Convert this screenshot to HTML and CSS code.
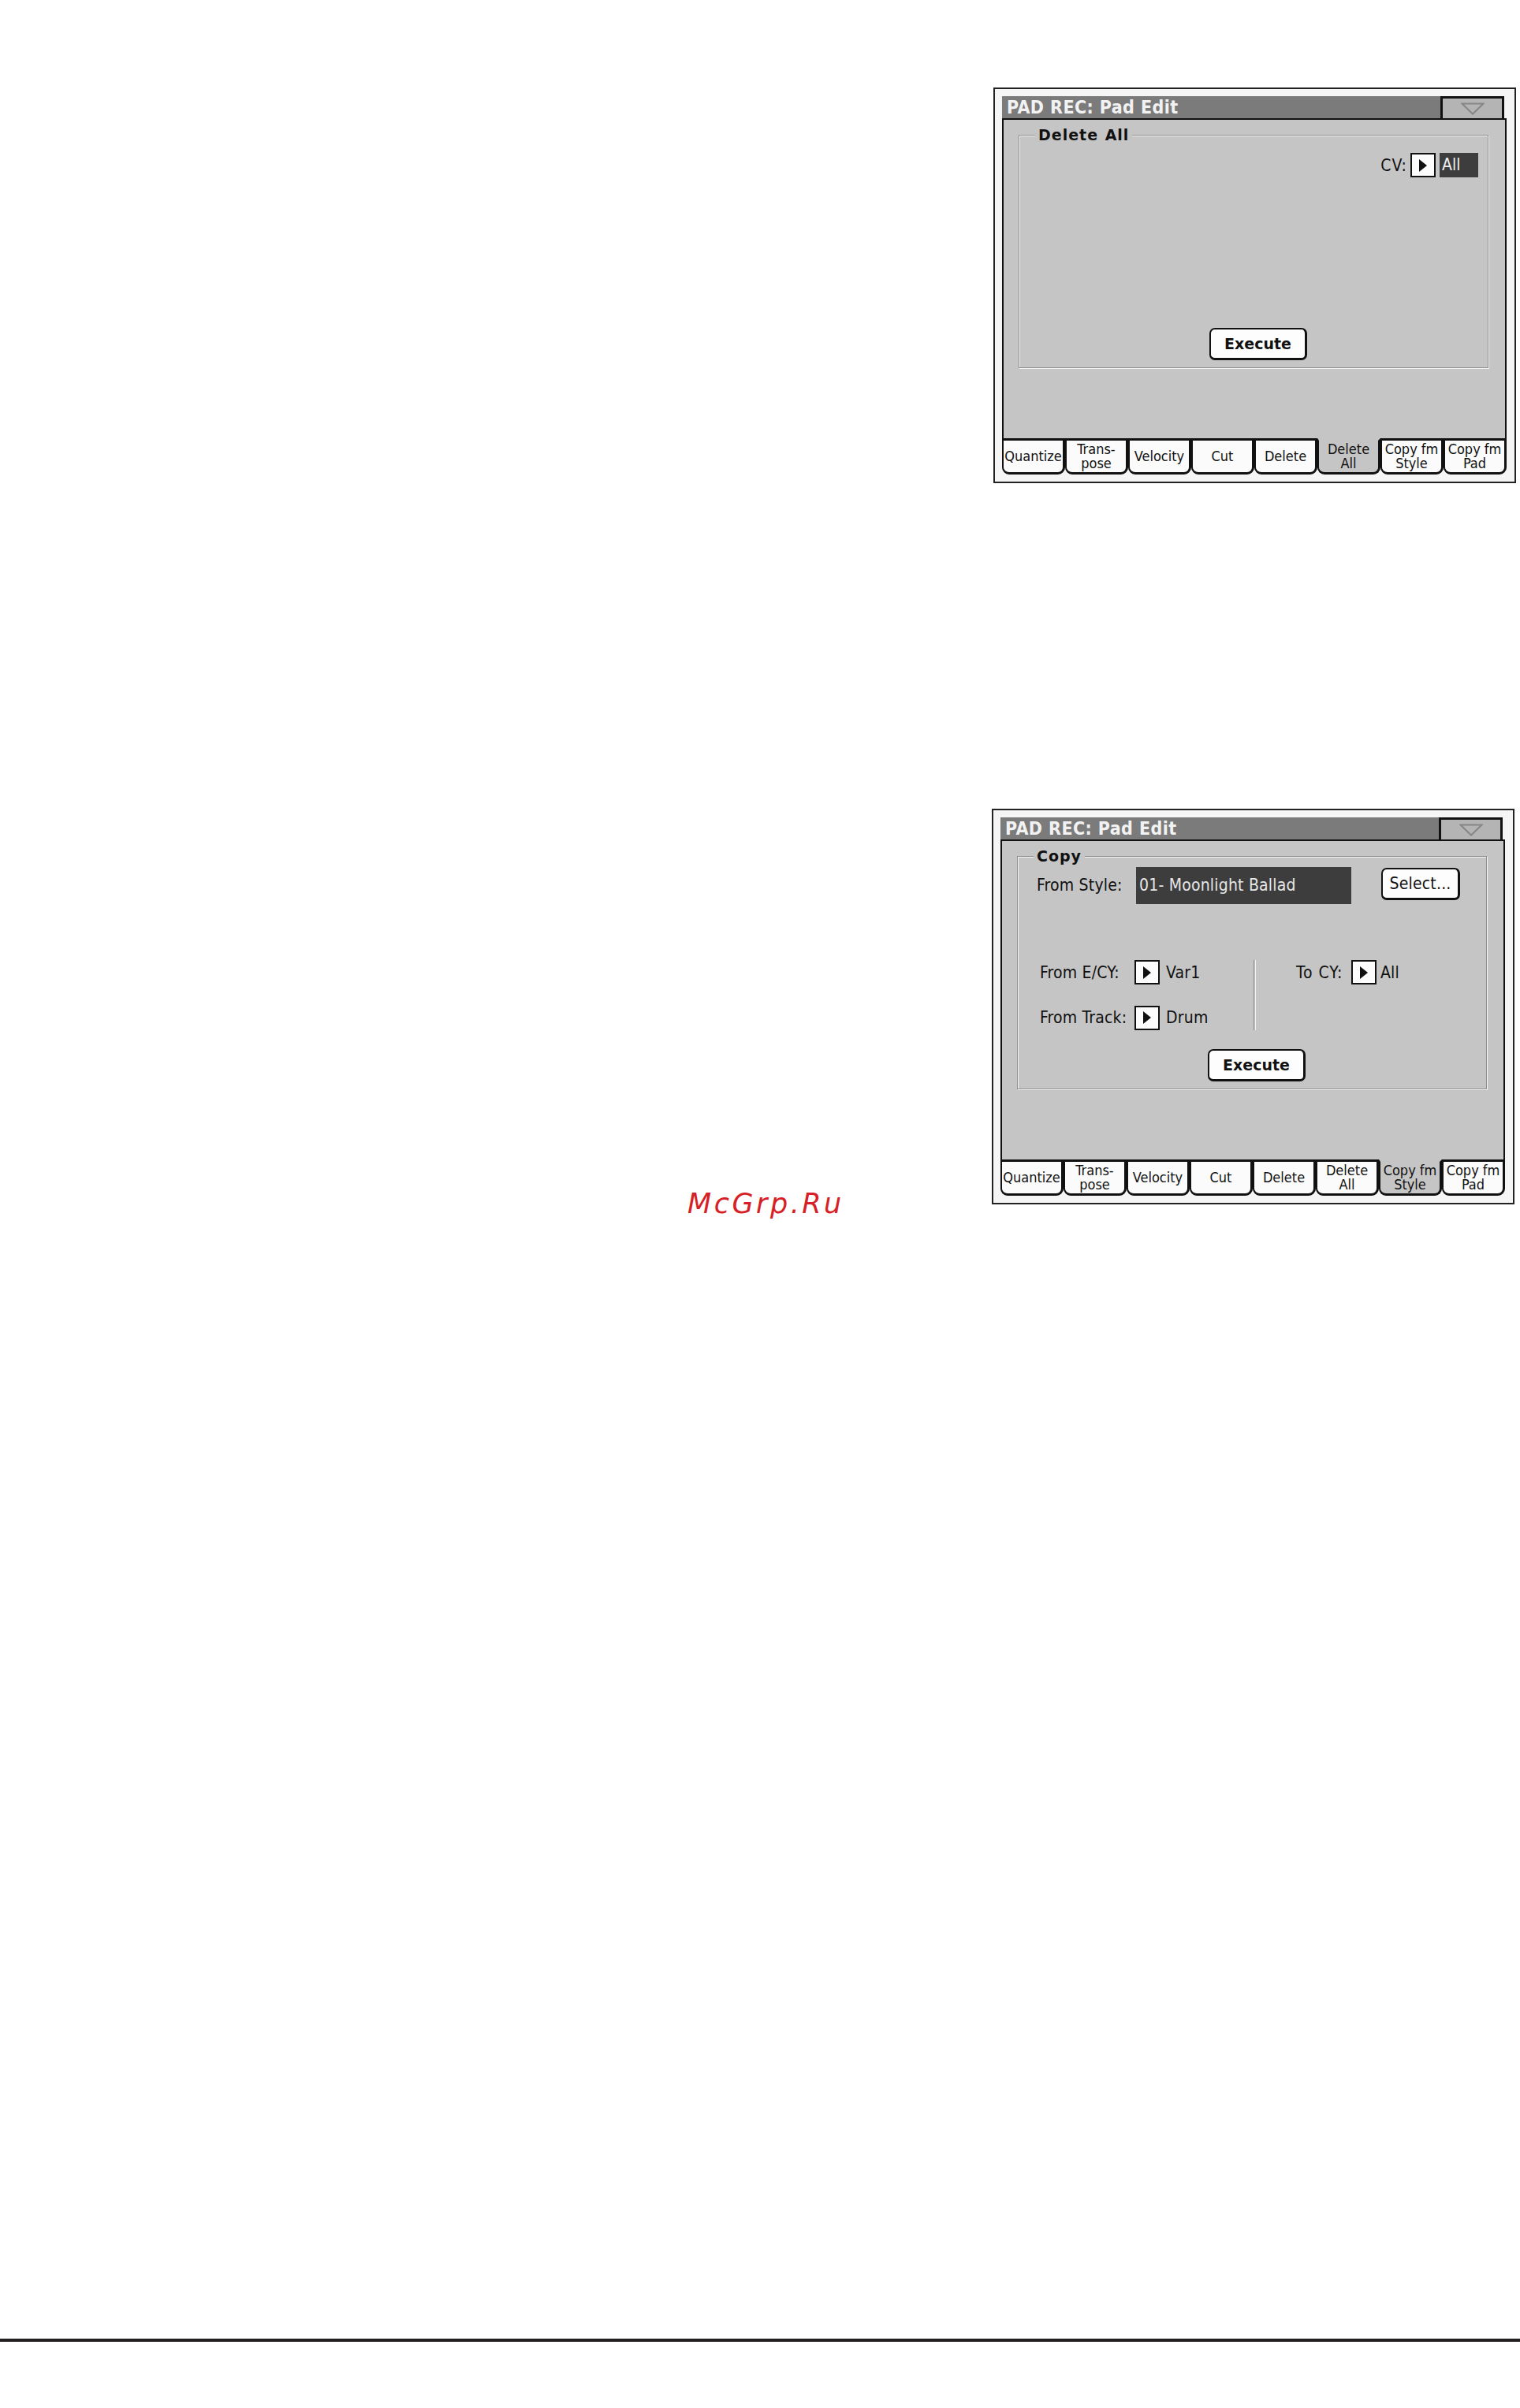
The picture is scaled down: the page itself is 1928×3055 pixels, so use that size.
FILE: index.html
```html
<!DOCTYPE html>
<html>
<head>
    <title>PAD REC: Pad Edit</title>
    <link rel="stylesheet" href="styles.css">
</head>
<body>
    <div class="page">
        <div class="row row-first">
            <div class="screen">
                <div class="lcd">
                    <div class="titlebar">
                        <span class="title">PAD REC: Pad Edit</span>
                        <span class="menu-button">
                            <svg width="30" height="16" viewBox="0 0 30 16"><polygon points="1.5,1.5 28.5,1.5 15,14.5" fill="none" stroke="#868686" stroke-width="2"/></svg>
                        </span>
                    </div>
                    <div class="panel">
                        <div class="group">
                            <div class="group-title">Delete All</div>
                            <div class="cv-row">
                                <span class="label">CV:</span>
                                <span class="arrow-box"><svg width="10" height="16" viewBox="0 0 10 16"><polygon points="0,0 10,8 0,16" fill="#111"/></svg></span>
                                <span class="value-dark">All</span>
                            </div>
                            <div class="execute">Execute</div>
                        </div>
                    </div>
                    <div class="tabs">
                        <div class="tab">Quantize</div>
                        <div class="tab">Trans-<br>pose</div>
                        <div class="tab">Velocity</div>
                        <div class="tab">Cut</div>
                        <div class="tab">Delete</div>
                        <div class="tab selected">Delete<br>All</div>
                        <div class="tab">Copy fm<br>Style</div>
                        <div class="tab">Copy fm<br>Pad</div>
                    </div>
                </div>
            </div>
        </div>

        <div class="row row-second">
            <div class="mark">McGrp.Ru</div>
            <div class="screen">
                <div class="lcd">
                    <div class="titlebar">
                        <span class="title">PAD REC: Pad Edit</span>
                        <span class="menu-button">
                            <svg width="30" height="16" viewBox="0 0 30 16"><polygon points="1.5,1.5 28.5,1.5 15,14.5" fill="none" stroke="#868686" stroke-width="2"/></svg>
                        </span>
                    </div>
                    <div class="panel">
                        <div class="group">
                            <div class="group-title">Copy</div>
                            <div class="style-row">
                                <span class="label">From Style:</span>
                                <span class="style-value">01- Moonlight Ballad</span>
                                <span class="select-button">Select...</span>
                            </div>
                            <div class="params">
                                <div class="params-left">
                                    <span class="label">From E/CY:</span>
                                    <span class="arrow-box"><svg width="10" height="16" viewBox="0 0 10 16"><polygon points="0,0 10,8 0,16" fill="#111"/></svg></span>
                                    <span class="value">Var1</span>
                                    <span class="label">From Track:</span>
                                    <span class="arrow-box"><svg width="10" height="16" viewBox="0 0 10 16"><polygon points="0,0 10,8 0,16" fill="#111"/></svg></span>
                                    <span class="value">Drum</span>
                                </div>
                                <div class="separator"></div>
                                <div class="params-right">
                                    <span class="label">To CY:</span>
                                    <span class="arrow-box"><svg width="10" height="16" viewBox="0 0 10 16"><polygon points="0,0 10,8 0,16" fill="#111"/></svg></span>
                                    <span class="value">All</span>
                                </div>
                            </div>
                            <div class="execute">Execute</div>
                        </div>
                    </div>
                    <div class="tabs">
                        <div class="tab">Quantize</div>
                        <div class="tab">Trans-<br>pose</div>
                        <div class="tab">Velocity</div>
                        <div class="tab">Cut</div>
                        <div class="tab">Delete</div>
                        <div class="tab">Delete<br>All</div>
                        <div class="tab selected">Copy fm<br>Style</div>
                        <div class="tab">Copy fm<br>Pad</div>
                    </div>
                </div>
            </div>
        </div>

        <div class="rule"></div>
    </div>
</body>
</html>
```

FILE: styles.css
```css
body {
    margin: 0;
    background-color: #ffffff;
    font-family: "DejaVu Sans", sans-serif;
}

.page {
    padding-top: 111px;
}

.row {
    display: flex;
    align-items: flex-start;
}

.row-first {
    justify-content: flex-end;
    padding-right: 5px;
}

.row-second {
    margin-top: 413px;
    padding-right: 7px;
}

.row-second .screen {
    margin-left: auto;
}

.mark {
    margin-left: 872px;
    margin-top: 484px;
    height: 35px;
    font-family: "DejaVu Sans", sans-serif;
    font-style: italic;
    font-size: 35px;
    line-height: 35px;
    letter-spacing: 3.5px;
    color: #d61f26;
}

.rule {
    margin-top: 1422px;
    height: 4px;
    background-color: #231f20;
}

/* screen frame */
.screen {
    border: 2px solid #222;
    padding: 9px 10px 9px 9px;
    background-color: #f5f5f5;
}

.lcd {
    width: 640px;
    height: 480px;
    display: flex;
    flex-direction: column;
    font-family: "DejaVu Sans Condensed", "DejaVu Sans", sans-serif;
    font-stretch: condensed;
    color: #111;
}

.titlebar {
    display: flex;
    height: 28px;
}

.title {
    flex: 1;
    background-color: #7b7b7b;
    color: #f2f2f2;
    font-weight: bold;
    font-size: 23px;
    line-height: 28px;
    letter-spacing: 0.4px;
    padding-left: 6px;
}

.menu-button {
    width: 81px;
    box-sizing: border-box;
    border: 3px solid #111;
    border-bottom: none;
    background-color: #b4b4b4;
    margin-right: 3px;
    display: flex;
    justify-content: center;
    align-items: center;
}

.panel {
    height: 406px;
    box-sizing: border-box;
    border: 2px solid #111;
    border-bottom: none;
    background-color: #c5c5c5;
    padding: 19px 21px 0 19px;
}

.group {
    height: 296px;
    box-sizing: border-box;
    border: 1px solid #8f8f8f;
    box-shadow: inset 1px 1px 0 #f3f3f3, 1px 1px 0 #f3f3f3;
    display: flex;
    flex-direction: column;
}

.group-title {
    align-self: flex-start;
    margin: -12px 0 0 20px;
    padding: 0 4px;
    background-color: #c5c5c5;
    font-family: "DejaVu Sans", sans-serif;
    font-stretch: normal;
    font-weight: bold;
    font-size: 19px;
    line-height: 22px;
    letter-spacing: 1px;
    word-spacing: 1px;
}

.label,
.value,
.style-value,
.select-button {
    font-size: 21px;
    line-height: 24px;
    letter-spacing: 0.2px;
    white-space: nowrap;
}

.arrow-box {
    width: 32px;
    height: 31px;
    box-sizing: border-box;
    border: 2px solid #111;
    background-color: #fcfcfc;
    display: flex;
    justify-content: center;
    align-items: center;
}

.cv-row {
    display: flex;
    justify-content: flex-end;
    align-items: center;
    margin-top: 12px;
    margin-right: 12px;
}

.cv-row .label {
    margin-right: 4px;
    letter-spacing: 1px;
}

.value-dark {
    width: 49px;
    height: 31px;
    margin-left: 5px;
    box-sizing: border-box;
    padding-left: 3px;
    background-color: #3d3d3d;
    color: #eeeeee;
    font-size: 21px;
    line-height: 31px;
}

.execute {
    align-self: flex-start;
    margin: auto 0 9px 241px;
    width: 124px;
    height: 41px;
    box-sizing: border-box;
    border: 2px solid #111;
    border-right-width: 3px;
    border-bottom-width: 3px;
    border-radius: 7px;
    background-color: #fdfdfd;
    font-family: "DejaVu Sans", sans-serif;
    font-stretch: normal;
    font-weight: bold;
    font-size: 19px;
    line-height: 36px;
    text-align: center;
}

/* copy page */
.style-row {
    display: flex;
    align-items: flex-start;
    margin-top: 3px;
    padding-left: 24px;
}

.style-row .label {
    width: 122px;
    line-height: 47px;
}

.style-value {
    width: 273px;
    height: 47px;
    margin-left: 4px;
    box-sizing: border-box;
    padding: 0 4px;
    line-height: 47px;
    background-color: #3d3d3d;
    color: #e6e6e6;
}

.select-button {
    width: 100px;
    height: 41px;
    margin: 1px 0 0 38px;
    box-sizing: border-box;
    border: 2px solid #111;
    border-right-width: 3px;
    border-bottom-width: 3px;
    border-radius: 7px;
    background-color: #fdfdfd;
    line-height: 36px;
    text-align: center;
}

.params {
    display: flex;
    margin-top: 71px;
}

.params-left {
    flex: 0 0 299px;
    box-sizing: border-box;
    padding-left: 28px;
    display: grid;
    grid-template-columns: 115px 32px auto;
    column-gap: 5px;
    row-gap: 26px;
    align-items: center;
}

.params-left .value {
    margin-left: 3px;
}

.separator {
    width: 1px;
    height: 89px;
    border-left: 1px solid #8f8f8f;
    border-right: 1px solid #f3f3f3;
}

.params-right {
    display: flex;
    align-items: center;
    align-self: flex-start;
    margin-left: 51px;
}

.params-right .label {
    width: 66px;
    letter-spacing: 1px;
}

.params-right .arrow-box {
    margin-left: 4px;
}

.params-right .value {
    margin-left: 5px;
}

/* tabs */
.tabs {
    display: flex;
    height: 46px;
}

.tab {
    width: 80px;
    box-sizing: border-box;
    border-style: solid;
    border-color: #111;
    border-width: 3px 3px 3px 2px;
    border-radius: 0 0 9px 9px;
    background-color: #fbfbfb;
    display: flex;
    justify-content: center;
    align-items: center;
    text-align: center;
    font-size: 18px;
    line-height: 18px;
}

.tab.selected {
    background-color: #c5c5c5;
    border-top-color: #c5c5c5;
}
```
